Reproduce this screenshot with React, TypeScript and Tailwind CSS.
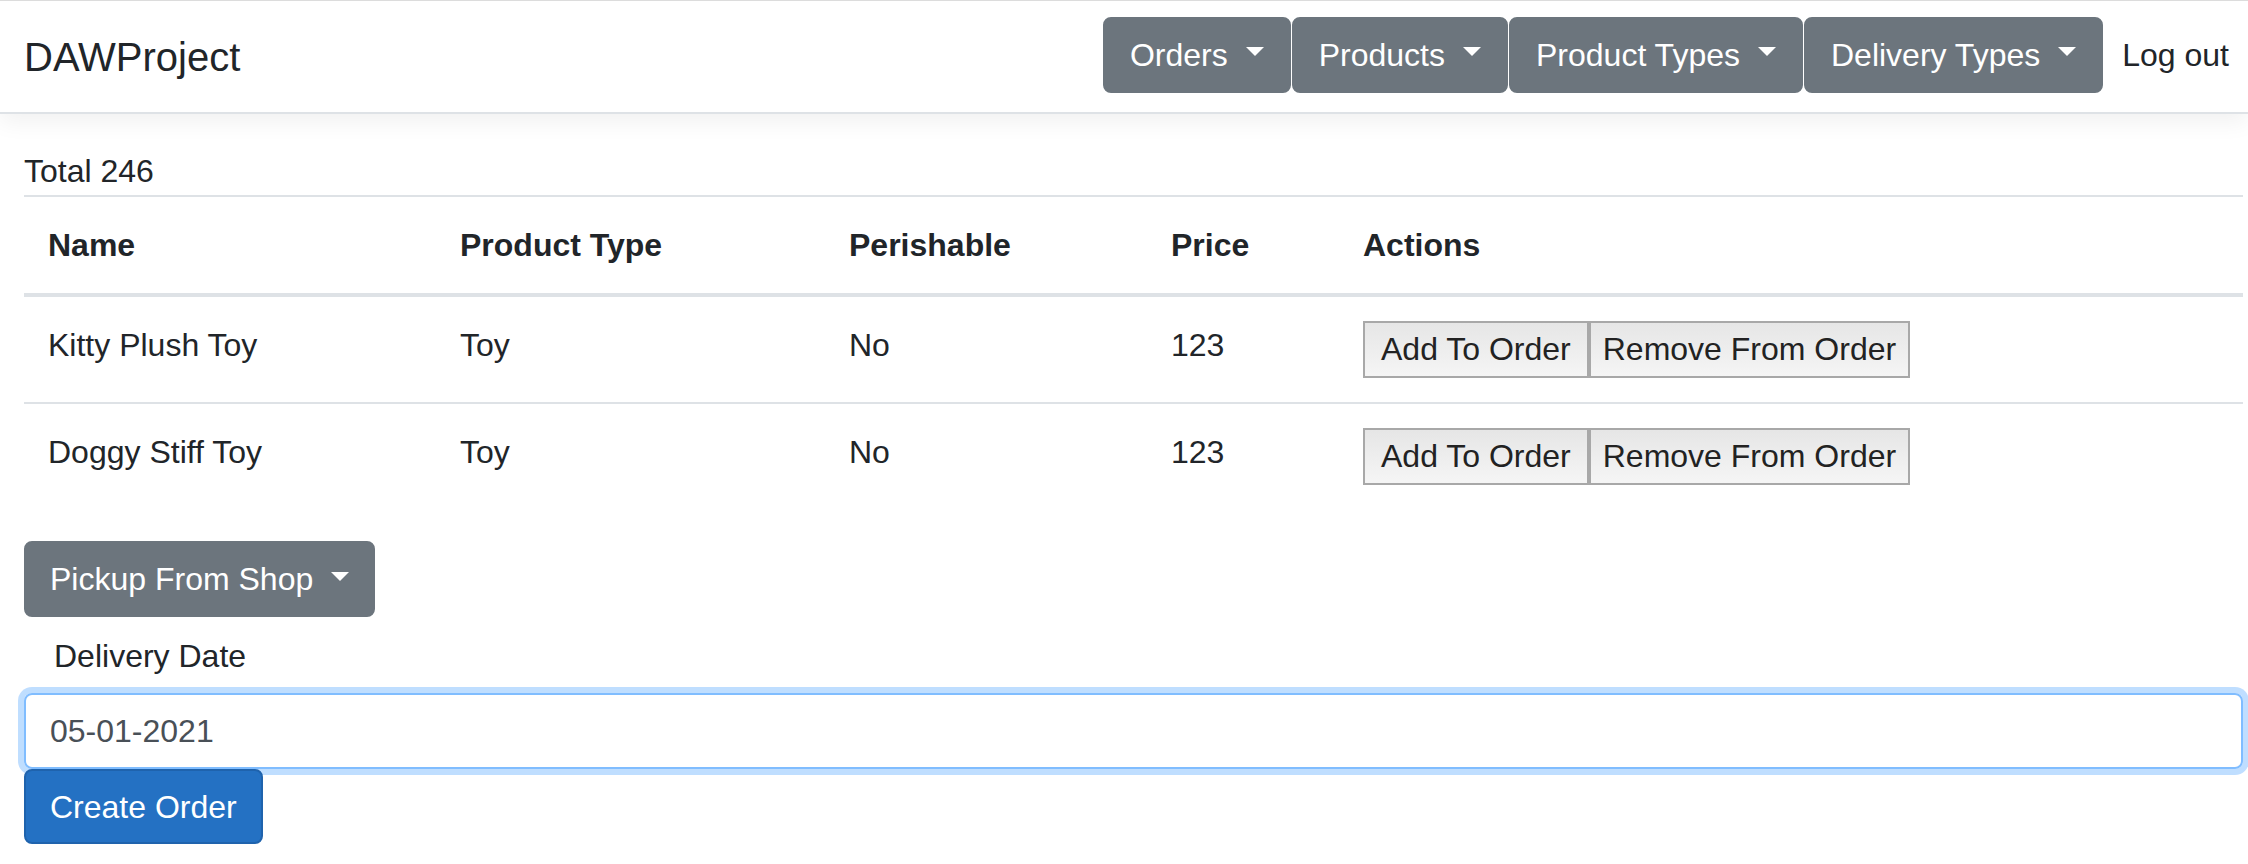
import React from 'react';

const font = { fontFamily: '"Liberation Sans", Arial, sans-serif' };

function Caret() {
  return (
    <span className="ml-[18px] inline-block w-0 h-0 border-t-[9px] border-t-white border-x-[9px] border-x-transparent -translate-y-[3px]" />
  );
}

function NavButton({ label }: { label: string }) {
  return (
    <button
      type="button"
      className="flex items-center h-[76px] px-[25px] rounded-[8px] border-2 border-[#6c757d] bg-[#6c757d] text-white text-[32px] leading-[48px]"
    >
      {label}
      <Caret />
    </button>
  );
}

const products = [
  { name: 'Kitty Plush Toy', type: 'Toy', perishable: 'No', price: 123 },
  { name: 'Doggy Stiff Toy', type: 'Toy', perishable: 'No', price: 123 },
];

function PlainButton({ children, pad }: { children: React.ReactNode; pad: string }) {
  return (
    <button
      type="button"
      className={`h-[57px] ${pad} border-2 border-[#a8a8a8] bg-gradient-to-b from-[#e6e6e6] to-[#f5f5f5] text-[#222] text-[32px] leading-[37px]`}
    >
      {children}
    </button>
  );
}

export default function App() {
  return (
    <div className="min-h-screen bg-white text-[#212529]" style={font}>
      {/* Top bar */}
      <nav className="relative z-10 bg-white border-t border-[#dcdcdc] border-b-2 border-b-[#dee2e6] shadow-[0_8px_22px_rgba(0,0,0,0.06)]">
        <div className="h-[111px] pb-[4px] pl-[24px] pr-[3px] flex items-center justify-between">
          <span className="mt-[5px] text-[40px] leading-[60px] text-[#212529]">DAWProject</span>
          <div className="flex items-center gap-[1px]">
            <NavButton label="Orders" />
            <NavButton label="Products" />
            <NavButton label="Product Types" />
            <NavButton label="Delivery Types" />
            <a className="ml-[2px] px-[16px] text-[32px] leading-[48px] text-[#212529]">Log out</a>
          </div>
        </div>
      </nav>

      <div className="pl-[24px] pr-[5px] pt-[33px]">
        <div className="text-[32px] leading-[48px]">Total 246</div>

        <table className="w-full table-fixed border-collapse text-[32px] leading-[48px] mb-[32px]">
          <colgroup>
            <col className="w-[412px]" />
            <col className="w-[389px]" />
            <col className="w-[322px]" />
            <col className="w-[192px]" />
            <col />
          </colgroup>
          <thead>
            <tr>
              {['Name', 'Product Type', 'Perishable', 'Price', 'Actions'].map((h) => (
                <th
                  key={h}
                  className="p-[24px] text-left font-bold align-bottom border-t-2 border-t-[#dee2e6] border-b-4 border-b-[#dee2e6]"
                >
                  {h}
                </th>
              ))}
            </tr>
          </thead>
          <tbody>
            {products.map((p, i) => (
              <tr key={p.name} className={i > 0 ? 'border-t-2 border-[#dee2e6]' : ''}>
                <td className="p-[24px] align-top">{p.name}</td>
                <td className="p-[24px] align-top">{p.type}</td>
                <td className="p-[24px] align-top">{p.perishable}</td>
                <td className="p-[24px] align-top">{p.price}</td>
                <td className="p-[24px] align-top">
                  <div className="flex">
                    <PlainButton pad="px-[16px]">Add To Order</PlainButton>
                    <PlainButton pad="px-[12px]">Remove From Order</PlainButton>
                  </div>
                </td>
              </tr>
            ))}
          </tbody>
        </table>

        <button
          type="button"
          className="flex items-center h-[76px] px-[24px] rounded-[8px] border-2 border-[#6c757d] bg-[#6c757d] text-white text-[32px] leading-[48px]"
        >
          Pickup From Shop
          <Caret />
        </button>

        <div className="pl-[30px] mt-[15px] mb-[13px] text-[32px] leading-[48px]">Delivery Date</div>

        <input
          type="text"
          defaultValue="05-01-2021"
          className="block w-full h-[76px] px-[24px] rounded-[8px] border-2 border-[#80bdff] text-[32px] leading-[48px] text-[#495057] outline-none shadow-[0_0_0_6px_rgba(0,123,255,0.25)]"
          style={font}
        />

        <button
          type="button"
          className="relative h-[75px] px-[24px] rounded-[8px] border-2 border-[#1f63ad] bg-[#2471c3] text-white text-[32px] leading-[48px]"
        >
          Create Order
        </button>
      </div>
    </div>
  );
}
